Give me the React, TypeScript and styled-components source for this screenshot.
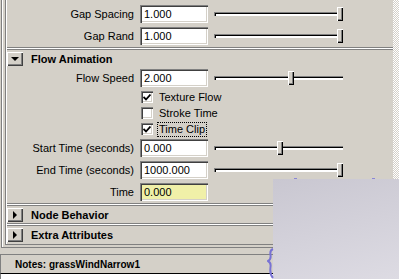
import React from "react";
import styled, { createGlobalStyle } from "styled-components";

const GlobalStyle = createGlobalStyle`
  html, body {
    margin: 0;
    padding: 0;
    background: #d4d0c8;
  }
  body {
    font-family: "Liberation Sans", Arial, sans-serif;
    font-size: 11px;
    color: #000;
  }
`;

const Page = styled.div`
  position: relative;
  width: 399px;
  height: 279px;
  overflow: hidden;
  background: #d4d0c8;
  display: flex;
  flex-direction: column;
`;

const Scroll = styled.div`
  display: flex;
  height: 248px;
  padding-left: 1px;
`;

const ScrollBody = styled.div`
  flex: 1;
  display: flex;
  border-left: 1px solid #808080;
  border-bottom: 1px solid #808080;
  box-shadow: inset 1px 0 #fff;
  padding-left: 3px;
  padding-bottom: 2px;
`;

const ScrollBar = styled.div`
  width: 6px;
  background: repeating-conic-gradient(#ffffff 0 25%, #d4d0c8 0 50%) 0 0 / 2px 2px;
`;

const Frame = styled.div`
  flex: 1;
  display: flex;
  flex-direction: column;
  border-left: 1px solid #808080;
  border-bottom: 1px solid #808080;
  box-shadow: inset 1px 0 #fff;
  padding-left: 1px;
  padding-top: 3px;
  overflow: hidden;
`;

const Row = styled.div`
  display: flex;
  align-items: center;
  height: 22px;
  flex-shrink: 0;
`;

const Label = styled.div`
  width: 127px;
  margin-right: 6px;
  text-align: right;
  white-space: nowrap;
`;

const Field = styled.div<{ $bg?: string }>`
  box-sizing: border-box;
  width: 68px;
  height: 18px;
  line-height: 18px;
  padding-left: 4px;
  background: ${({ $bg }) => $bg || "#fff"};
  box-shadow: inset 1px 1px #808080, inset 2px 2px #404040,
    inset -1px -1px #fff, inset -2px -2px #d4d0c8;
`;

const Slider = styled.div`
  position: relative;
  margin-left: 6px;
  width: 129px;
  height: 14px;
`;

const Track = styled.div`
  position: absolute;
  left: 0;
  right: 0;
  top: 5px;
  height: 4px;
  box-sizing: border-box;
  background: #fff;
  border-top: 1px solid #808080;
  border-left: 1px solid #808080;
  box-shadow: inset 1px 1px #000;
`;

const Thumb = styled.div`
  position: absolute;
  top: 0;
  width: 6px;
  height: 14px;
  box-sizing: border-box;
  background: #d4d0c8;
  box-shadow: inset 1px 1px #fff, inset -1px -1px #000, inset -2px -2px #808080;
`;

const CheckRow = styled.div`
  display: flex;
  align-items: center;
  height: 16px;
  padding-left: 134px;
  flex-shrink: 0;
`;

const Box = styled.div`
  box-sizing: border-box;
  width: 12px;
  height: 12px;
  background: #fff;
  box-shadow: inset 1px 1px #808080, inset 2px 2px #404040,
    inset -1px -1px #fff, inset -2px -2px #d4d0c8;
  display: flex;
  align-items: center;
  justify-content: center;
`;

const CheckText = styled.span<{ $focus?: boolean }>`
  margin-left: 5px;
  padding: 0 1px;
  line-height: 13px;
  outline: ${({ $focus }) => ($focus ? "1px dotted #000" : "none")};
`;

const Separator = styled.div`
  height: 1px;
  border-top: 1px solid #808080;
  border-bottom: 1px solid #808080;
  background: #fff;
  flex-shrink: 0;
`;

const Header = styled.div`
  display: flex;
  align-items: center;
  height: 17px;
  flex-shrink: 0;
`;

const ToggleButton = styled.div`
  box-sizing: border-box;
  width: 16px;
  height: 14px;
  background: #d4d0c8;
  box-shadow: inset 1px 1px #fff, inset -1px -1px #404040, inset -2px -2px #808080;
  display: flex;
  align-items: center;
  justify-content: center;
`;

const ArrowDown = styled.div`
  width: 0;
  height: 0;
  border-left: 4px solid transparent;
  border-right: 4px solid transparent;
  border-top: 4px solid #000;
  margin-right: 1px;
`;

const ArrowRight = styled.div`
  width: 0;
  height: 0;
  border-top: 4px solid transparent;
  border-bottom: 4px solid transparent;
  border-left: 4px solid #000;
`;

const HeaderTitle = styled.div`
  margin-left: 8px;
  font-weight: bold;
`;

const Notes = styled.div`
  margin-top: 6px;
  display: flex;
  flex-direction: column;
  flex: 1;
`;

const NotesBar = styled.div`
  height: 18px;
  border-top: 1px solid #808080;
  border-left: 1px solid #808080;
  padding-left: 14px;
  display: flex;
  align-items: center;
  font-size: 10px;
  font-weight: bold;
`;

const NotesField = styled.div`
  flex: 1;
  background: #fff;
  border-top: 1px solid #000;
  border-left: 1px solid #808080;
`;

const Overlay = styled.div`
  position: absolute;
  left: 273px;
  top: 179px;
  right: 0;
  bottom: 0;
  background: linear-gradient(165deg, #c9c7d1 0%, #d3d1da 50%, #dddbe3 100%);
`;

const Dot = styled.div`
  position: absolute;
  top: 178px;
  width: 3px;
  height: 1px;
  background: #8a86d6;
`;

const Brace = styled.svg`
  position: absolute;
  left: 267px;
  top: 248px;
`;

const sliderRows = [
  { label: "Gap Spacing", value: "1.000", pos: 1 },
  { label: "Gap Rand", value: "1.000", pos: 1 },
];

const SliderRow = ({ label, value, pos, bg }: { label: string; value: string; pos?: number; bg?: string }) => (
  <Row>
    <Label>{label}</Label>
    <Field $bg={bg}>{value}</Field>
    {pos !== undefined && (
      <Slider>
        <Track />
        <Thumb style={{ left: Math.round(pos * 123) }} />
      </Slider>
    )}
  </Row>
);

const Check = ({ label, checked, focus }: { label: string; checked: boolean; focus?: boolean }) => (
  <CheckRow>
    <Box>
      {checked && (
        <svg width="8" height="7" viewBox="0 0 8 7">
          <path d="M0.5 3 L3 5.5 L7.5 0.5" stroke="#000" strokeWidth="1.8" fill="none" />
        </svg>
      )}
    </Box>
    <CheckText $focus={focus}>{label}</CheckText>
  </CheckRow>
);

const Section = ({ title, open }: { title: string; open?: boolean }) => (
  <>
    <Separator />
    <Header>
      <ToggleButton>{open ? <ArrowDown /> : <ArrowRight />}</ToggleButton>
      <HeaderTitle>{title}</HeaderTitle>
    </Header>
  </>
);

export default function App() {
  return (
    <Page>
      <GlobalStyle />
      <Scroll>
        <ScrollBody>
          <Frame>
            {sliderRows.map((r) => (
              <SliderRow key={r.label} {...r} />
            ))}
            <Section title="Flow Animation" open />
            <SliderRow label="Flow Speed" value="2.000" pos={0.6} />
            <Check label="Texture Flow" checked />
            <Check label="Stroke Time" checked={false} />
            <Check label="Time Clip" checked focus />
            <SliderRow label="Start Time (seconds)" value="0.000" pos={0.51} />
            <SliderRow label="End Time (seconds)" value="1000.000" pos={1} />
            <SliderRow label="Time" value="0.000" bg="#f0f0a8" />
            <Section title="Node Behavior" />
            <Section title="Extra Attributes" />
          </Frame>
        </ScrollBody>
        <ScrollBar />
      </Scroll>
      <Notes>
        <NotesBar>Notes: grassWindNarrow1</NotesBar>
        <NotesField />
      </Notes>
      <Overlay />
      <Dot style={{ left: 294 }} />
      <Dot style={{ left: 372 }} />
      <Brace width="7" height="31" viewBox="0 0 7 31">
        <path d="M6 1 C3 2 3 4 3.5 7 C4 10 3 12 1 13 C3 14 4 16 3.5 19 C3 23 3 27 6 30" stroke="#7872d4" strokeWidth="2" fill="none" />
      </Brace>
    </Page>
  );
}
